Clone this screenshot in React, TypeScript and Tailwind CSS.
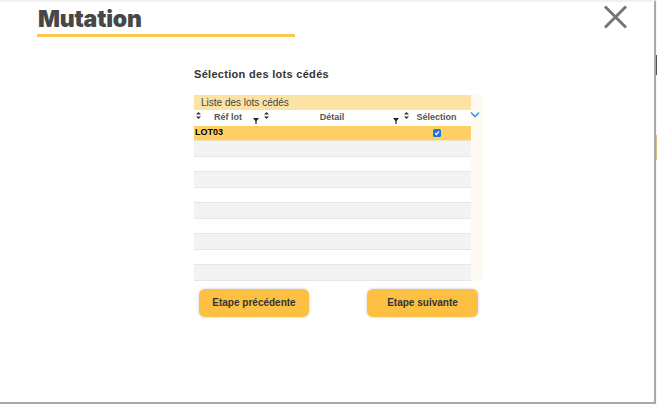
import React from 'react';

const SortIcon = () => (
  <svg width="5" height="7" viewBox="0 0 5 7" className="shrink-0">
    <path d="M2.5 0 L5 2.6 H0 Z" fill="#333" />
    <path d="M2.5 7 L5 4.4 H0 Z" fill="#333" />
  </svg>
);

const FilterIcon = () => (
  <svg width="6" height="6" viewBox="0 0 6 6" className="shrink-0">
    <path d="M0 0 H6 L3.6 3 V6 H2.4 V3 Z" fill="#222" />
  </svg>
);

const HeaderCell: React.FC<{ label: string; width: string; filter?: boolean }> = ({ label, width, filter }) => (
  <div className={`${width} h-full relative flex items-center justify-center`}>
    <div className="absolute left-[2px] top-[2px]">
      <SortIcon />
    </div>
    <span className="text-[9px] font-semibold text-[#555]">{label}</span>
    {filter && (
      <div className="absolute right-[3px] bottom-[2px]">
        <FilterIcon />
      </div>
    )}
  </div>
);

const App: React.FC = () => {
  const emptyRows = Array.from({ length: 9 });

  return (
    <div className="w-[657px] h-[405px] flex bg-white overflow-hidden" style={{ fontFamily: '"Liberation Sans", Arial, sans-serif' }}>
      {/* MODAL */}
      <div className="w-[656px] h-[404px] border-t-2 border-t-[#f1f1f1] border-r-2 border-r-[#a8a8a6] border-b-2 border-b-[#a8a8a6] flex flex-col relative">
        {/* TITLE */}
        <div className="pl-[37px] pt-[4px]">
          <div className="w-[258px] border-b-[3px] border-[#fdc650] pb-[1px]">
            <h1 className="text-[23px] leading-[27px] font-black text-[#474747] tracking-[-0.2px] pl-[1px]" style={{ fontFamily: 'Inter, sans-serif' }}>
              Mutation
            </h1>
          </div>
        </div>

        {/* CLOSE */}
        <button className="absolute left-[603px] top-[3px] w-[25px] h-[24px] flex items-center justify-center">
          <svg width="25" height="24" viewBox="0 0 25 24">
            <path d="M2 1.5 L23 22.5 M23 1.5 L2 22.5" stroke="#767676" strokeWidth="3" />
          </svg>
        </button>

        {/* CONTENT */}
        <div className="pl-[194px] pt-[31px] flex flex-col">
          <h2 className="text-[11px] leading-[13px] font-bold text-[#333] tracking-[0.3px]">Sélection des lots cédés</h2>

          <div className="mt-[14px] flex">
            <div className="w-[277px] flex flex-col">
              <div className="h-[15px] bg-[#fde3a3] flex items-center pl-[7px]">
                <span className="text-[10px] text-[#444]">Liste des lots cédés</span>
              </div>
              <div className="h-[16px] bg-white flex">
                <HeaderCell label="Réf lot" width="w-[68px]" filter />
                <HeaderCell label="Détail" width="w-[140px]" filter />
                <HeaderCell label="Sélection" width="w-[69px]" />
              </div>
              <div className="h-[15px] bg-[#ffcf63] flex items-center border-b border-[#f0e2c0]">
                <span className="w-[208px] pl-[1px] text-[9px] font-bold text-black">LOT03</span>
                <span className="w-[69px] flex justify-center">
                  <span className="w-[8px] h-[8px] rounded-[1.5px] bg-[#1e77d6] flex items-center justify-center">
                    <svg width="6" height="6" viewBox="0 0 6 6">
                      <path d="M1 3.2 L2.4 4.6 L5 1.4" stroke="white" strokeWidth="1.2" fill="none" />
                    </svg>
                  </span>
                </span>
              </div>
              {emptyRows.map((_, i) => (
                <div
                  key={i}
                  className={`h-[15.5px] border-b border-[#e6e6e6] ${i % 2 === 0 ? 'bg-[#f3f3f3]' : 'bg-white'}`}
                />
              ))}
            </div>
            <div className="w-[12px] bg-[#fffaf1] flex flex-col pt-[16px]">
              <svg width="10" height="7" viewBox="0 0 10 7" className="ml-[-1px]">
                <path d="M1 1.5 L5 5.5 L9 1.5" stroke="#3a9be0" strokeWidth="1.6" fill="none" />
              </svg>
            </div>
          </div>

          {/* BUTTONS */}
          <div className="flex w-[284px] justify-between pl-[5px] mt-[8px]">
            <button className="w-[110px] h-[28px] rounded-[6px] bg-[#fec042] shadow-[0_0_3px_rgba(120,140,180,0.45)] text-[10px] font-bold text-[#333]">
              Etape précédente
            </button>
            <button className="w-[111px] h-[28px] rounded-[6px] bg-[#fec042] shadow-[0_0_3px_rgba(120,140,180,0.45)] text-[10px] font-bold text-[#333]">
              Etape suivante
            </button>
          </div>
        </div>
      </div>

      {/* BACKDROP STRIP */}
      <div className="w-[1px] flex flex-col bg-[#f7f7f7]">
        <div className="h-[55px]" />
        <div className="h-[20px] bg-[#555]" />
        <div className="h-[60px]" />
        <div className="h-[25px] bg-[#d9bf7f]" />
      </div>
    </div>
  );
};

export default App;
